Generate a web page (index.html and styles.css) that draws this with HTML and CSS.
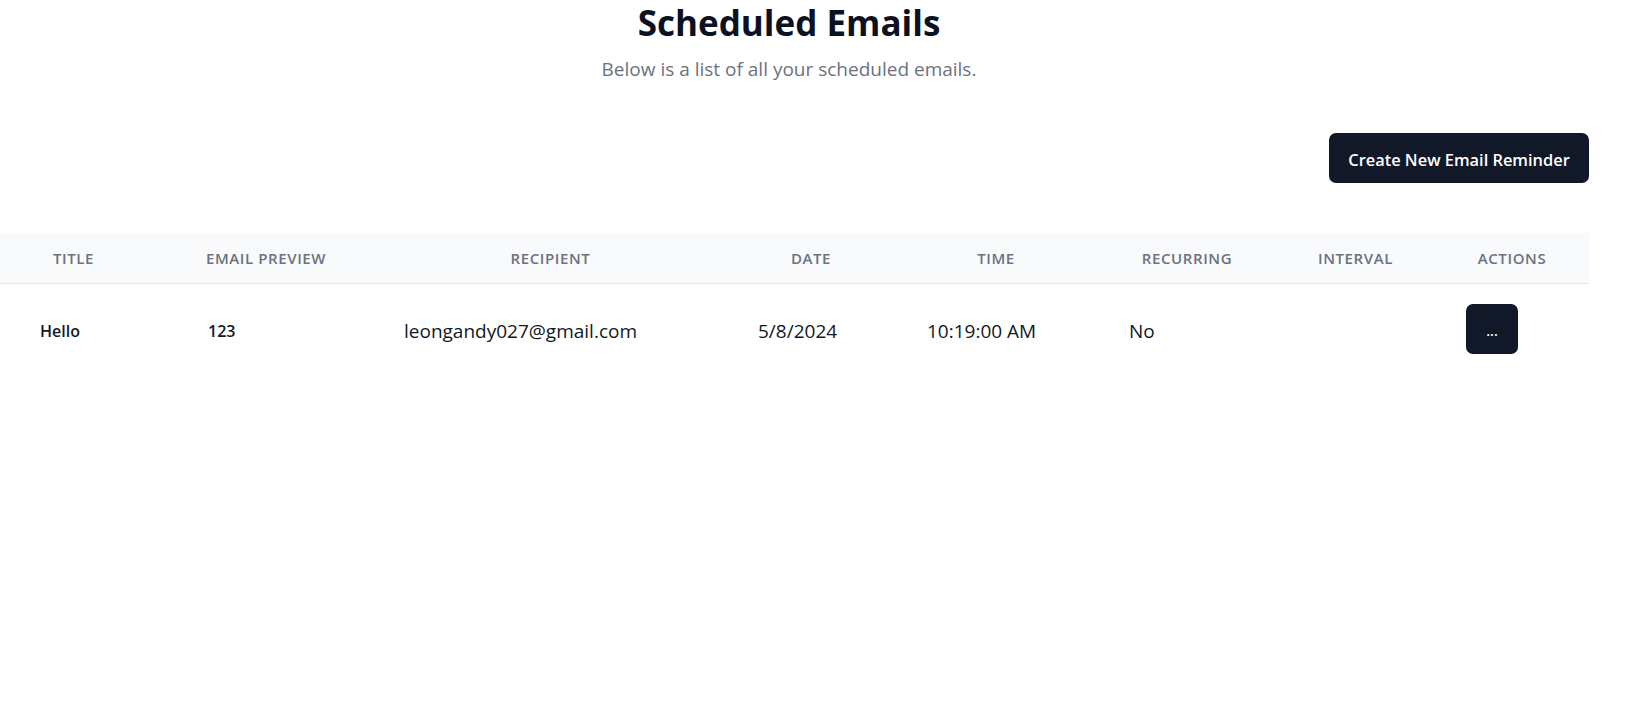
FILE: index.html
```html
<!DOCTYPE html>
<html lang="en">
<head>
<meta charset="utf-8">
<title>Scheduled Emails</title>
<link rel="stylesheet" href="styles.css">
</head>
<body>
<main class="page">
  <header class="intro">
    <h1 class="title">Scheduled Emails</h1>
    <p class="subtitle">Below is a list of all your scheduled emails.</p>
  </header>
  <div class="toolbar">
    <button class="btn-primary" type="button">Create New Email Reminder</button>
  </div>
  <div class="table">
    <div class="row head">
      <div class="th">Title</div>
      <div class="th">Email Preview</div>
      <div class="th">Recipient</div>
      <div class="th">Date</div>
      <div class="th">Time</div>
      <div class="th">Recurring</div>
      <div class="th">Interval</div>
      <div class="th th-actions">Actions</div>
    </div>
    <div class="row body">
      <div class="td td-title strong">Hello</div>
      <div class="td td-preview strong">123</div>
      <div class="td td-recipient">leongandy027@gmail.com</div>
      <div class="td td-date">5/8/2024</div>
      <div class="td td-time">10:19:00 AM</div>
      <div class="td td-recurring">No</div>
      <div class="td td-interval"></div>
      <div class="td td-actions"><button class="btn-dots" type="button">...</button></div>
    </div>
  </div>
</main>
</body>
</html>
```
FILE: styles.css
```css
html, body {
  margin: 0;
  padding: 0;
  background: #ffffff;
}
body {
  font-family: "Open Sans", "Noto Sans", "Liberation Sans", sans-serif;
  color: #111827;
}
.page {
  width: 1589px;
}
.intro {
  text-align: center;
  padding-right: 11px;
  padding-top: 3px;
}
.title {
  margin: 0;
  font-size: 35px;
  line-height: 40px;
  font-weight: 700;
  color: #0b1120;
}
.subtitle {
  margin: 12px 0 0;
  font-size: 19px;
  line-height: 28px;
  color: #6b7280;
}
.toolbar {
  display: flex;
  justify-content: flex-end;
  margin-top: 50px;
}
.btn-primary {
  font-family: inherit;
  height: 50px;
  width: 260px;
  padding: 3px 12px 0;
  border: 0;
  border-radius: 7px;
  background: #111827;
  color: #ffffff;
  font-size: 16.4px;
  font-weight: 600;
}
.table {
  margin-top: 50px;
}
.row {
  display: grid;
  grid-template-columns: 147px 238px 331px 190px 180px 202px 135px 166px;
  align-items: center;
}
.head {
  height: 50px;
  background: #f9fafb;
  border-bottom: 1px solid #e5e7eb;
}
.th {
  text-align: center;
  font-size: 15px;
  font-weight: 600;
  letter-spacing: 0.04em;
  text-transform: uppercase;
  color: #6b7280;
}
.th-actions {
  padding-left: 12px;
}
.body {
  padding: 20px 0;
}
.td {
  font-size: 19px;
  line-height: 26px;
  color: #111827;
  padding-top: 4px;
}
.strong {
  font-weight: 600;
  font-size: 16px;
}
.td-title { padding-left: 40px; }
.td-preview { padding-left: 61px; }
.td-recipient { padding-left: 19px; }
.td-date { padding-left: 42px; }
.td-time { padding-left: 21px; }
.td-recurring { padding-left: 43px; }
.td-actions { padding-left: 43px; padding-top: 0; }
.btn-dots {
  font-family: inherit;
  width: 52px;
  height: 50px;
  border: 0;
  border-radius: 7px;
  background: #111827;
  color: #ffffff;
  font-size: 14px;
  font-weight: 600;
  padding: 3px 0 0;
}
```
